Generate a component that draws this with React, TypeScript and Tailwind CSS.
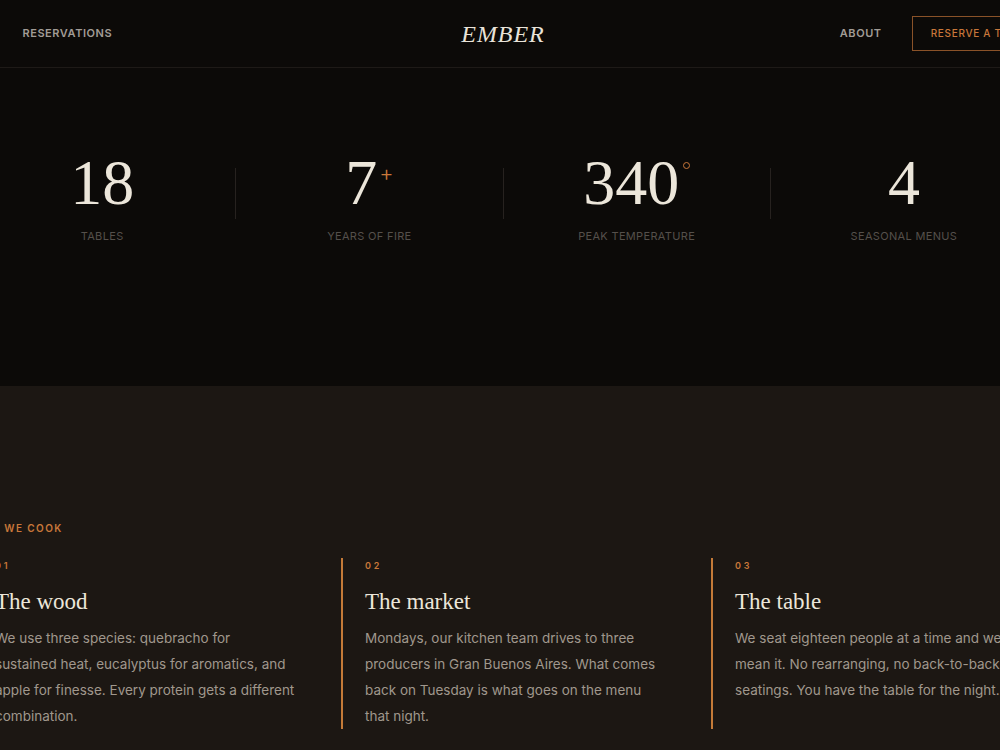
import { Fragment } from 'react';

const stats = [
  { value: '18', mark: null, label: 'Tables' },
  { value: '7', mark: 'plus', label: 'Years of fire' },
  { value: '340', mark: 'degree', label: 'Peak temperature' },
  { value: '4', mark: null, label: 'Seasonal menus' },
];

const steps = [
  {
    num: '01',
    title: 'The wood',
    body: 'We use three species: quebracho for sustained heat, eucalyptus for aromatics, and apple for finesse. Every protein gets a different combination.',
  },
  {
    num: '02',
    title: 'The market',
    body: 'Mondays, our kitchen team drives to three producers in Gran Buenos Aires. What comes back on Tuesday is what goes on the menu that night.',
  },
  {
    num: '03',
    title: 'The table',
    body: 'We seat eighteen people at a time and we mean it. No rearranging, no back-to-back seatings. You have the table for the night.',
  },
];

const serif = "font-['Liberation_Serif','Times_New_Roman',serif]";

const Header = () => (
  <header className="flex h-[68px] justify-center border-b border-[#1e1a17]">
    <div className="grid w-[1096px] shrink-0 grid-cols-[1fr_auto_1fr] items-center">
      <nav className="flex items-center gap-[35px] text-[11px] font-semibold tracking-[0.05em] text-[#a29c96] uppercase">
        <span>Menu</span>
        <span>Reservations</span>
      </nav>
      <span className={`${serif} ml-[6px] text-[24px] tracking-[0.04em] text-[#e9e3d9] italic`}>
        EMBER
      </span>
      <nav className="flex items-center justify-end gap-[30px] uppercase">
        <span className="text-[11px] font-semibold tracking-[0.05em] text-[#a29c96]">About</span>
        <span className="border border-[#8a5228] px-[18px] py-[9px] text-[10px] leading-[15px] font-medium tracking-[0.07em] text-[#c9773a]">
          Reserve a table
        </span>
      </nav>
    </div>
  </header>
);

const Stats = () => (
  <section className="flex h-[318px] items-start justify-center pt-[83px]">
    <div className="ml-[6px] grid w-[1068px] shrink-0 grid-cols-[1fr_1px_1fr_1px_1fr_1px_1fr] items-center">
      {stats.map((s, i) => (
        <Fragment key={s.label}>
          {i > 0 && <div className="mb-[8px] h-[51px] w-px bg-[#27221f]" />}
          <div className="flex flex-col items-center">
            <div className="flex items-start">
              <span className={`${serif} text-[64px] leading-none text-[#ece6da]`}>
                {s.value}
              </span>
              {s.mark === 'plus' && (
                <span className="mt-[11px] ml-[2px] font-['Inter',sans-serif] text-[22px] leading-[22px] font-light text-[#c9773a]">
                  +
                </span>
              )}
              {s.mark === 'degree' && (
                <span className="mt-[11px] ml-[4px] h-[7px] w-[7px] rounded-full border border-[#c9773a]" />
              )}
            </div>
            <span className="mt-[13px] text-[11px] tracking-[0.03em] text-[#55504b] uppercase">
              {s.label}
            </span>
          </div>
        </Fragment>
      ))}
    </div>
  </section>
);

const HowWeCook = () => (
  <section className="flex min-h-[364px] justify-center bg-[#1c1713] pt-[135px]">
    <div className="ml-[12px] w-[1070px] shrink-0">
      <span className="block text-[10px] font-semibold tracking-[0.14em] text-[#c9773a] uppercase">
        How we cook
      </span>
      <div className="mt-[22px] grid grid-cols-3 gap-10">
        {steps.map((s) => (
          <div key={s.num} className="border-l-2 border-[#c47a38] pt-[1px] pl-[22px]">
            <span className="block text-[9px] leading-[14px] font-semibold tracking-[0.3em] text-[#c9773a]">
              {s.num}
            </span>
            <h3 className={`${serif} mt-[15px] text-[23px] leading-[28px] text-[#ece6da]`}>
              {s.title}
            </h3>
            <p className="mt-[9px] w-[300px] text-[13.5px] leading-[26px] text-[#a0978d]">
              {s.body}
            </p>
          </div>
        ))}
      </div>
    </div>
  </section>
);

const App = () => (
  <div className="min-h-screen w-full overflow-hidden bg-[#0c0a08] font-['Inter',sans-serif]">
    <Header />
    <Stats />
    <HowWeCook />
  </div>
);

export default App;
